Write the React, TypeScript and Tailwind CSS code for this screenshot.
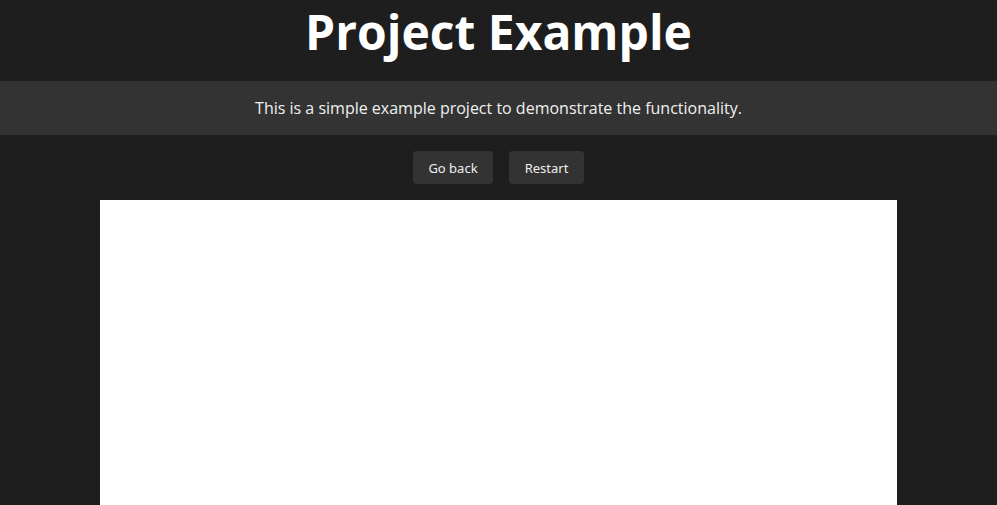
export default function App() {
  return (
    <div className="min-h-screen bg-[#1e1e1e] text-white" style={{ fontFamily: '"Open Sans", sans-serif' }}>
      <header className="h-[81px] text-center">
        <h1 className="text-[48px] font-bold leading-[64px]">Project Example</h1>
      </header>
      <div className="h-[54px] bg-[#333333] flex items-center justify-center">
        <p className="text-[16px] text-[#f0f0f0]">
          This is a simple example project to demonstrate the functionality.
        </p>
      </div>
      <div className="flex justify-center gap-4 pt-4">
        <button className="h-[33px] w-[80px] rounded bg-[#333333] pt-0.5 text-[13px] text-[#eeeeee]" style={{ fontFamily: '"Noto Sans", sans-serif' }}>
          Go back
        </button>
        <button className="h-[33px] w-[75px] rounded bg-[#333333] pt-0.5 text-[13px] text-[#eeeeee]" style={{ fontFamily: '"Noto Sans", sans-serif' }}>
          Restart
        </button>
      </div>
      <div className="mx-auto mt-4 h-[305px] w-4/5 bg-white" />
    </div>
  );
}
